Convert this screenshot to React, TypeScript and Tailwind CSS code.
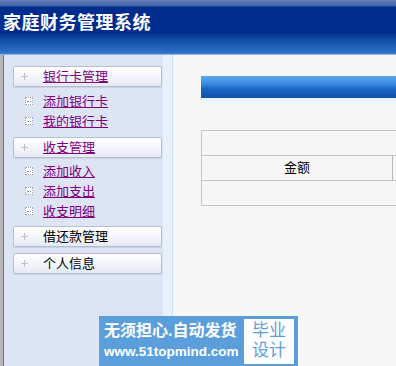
const font = { fontFamily: '"Liberation Sans", "Noto Sans CJK SC", sans-serif' };

function PlusIcon() {
    return (
        <svg width="9" height="9" viewBox="0 0 9 9" className="shrink-0">
            <path d="M4.5 1v7M1 4.5h7" stroke="#b8c0cc" strokeWidth="1" />
        </svg>
    );
}

function DotIcon() {
    return (
        <span className="shrink-0 w-[8px] h-[8px] border border-dotted border-[#9aa4b4] bg-white flex items-center justify-center">
            <span className="w-[4px] h-px border-t border-dotted border-[#8890a0]" />
        </span>
    );
}

type HeadProps = { label: string; link?: boolean };

function MenuHead({ label, link }: HeadProps) {
    return (
        <div className="w-[149px] h-[21px] ml-[9px] flex items-center border border-[#b6bfd0] rounded-[2px] bg-[linear-gradient(#ffffff,#f1f4fa_60%,#e4e9f4)] shadow-[0_1px_0_#c9d3e6]">
            <span className="ml-[6px]"><PlusIcon /></span>
            <span className={"ml-[14px] text-[13px] leading-none " + (link ? "text-[#800080] underline" : "text-black")}>{label}</span>
        </div>
    );
}

function SubItem({ label }: { label: string }) {
    return (
        <div className="h-[20px] flex items-center pl-[21px]">
            <DotIcon />
            <span className="ml-[10px] text-[13px] leading-none text-[#800080] underline">{label}</span>
        </div>
    );
}

export default function App() {
    return (
        <div className="relative w-[396px] h-[366px] overflow-hidden bg-[#f7f7f7]" style={font}>
            <div className="h-[55px] flex items-center bg-[linear-gradient(#6480b8_0px,#3d5fa6_6px,#002c8e_7px,#002c8e_33px,#1450a8_40px,#2a70c4_52px,#3a80d0_54px,#e8eef8_55px)]">
                <span className="ml-[3px] -mt-[8px] text-white text-[18px] font-bold tracking-[0.5px]">家庭财务管理系统</span>
            </div>
            <div className="flex h-[311px]">
                <div className="w-[4px] bg-[#b8b8b8] border-r border-[#707070]" />
                <div className="w-[159px] bg-[#dde5f5] pt-[11px]">
                    <MenuHead label="银行卡管理" link />
                    <div className="pt-[4px] pb-[6px]">
                        <SubItem label="添加银行卡" />
                        <SubItem label="我的银行卡" />
                    </div>
                    <MenuHead label="收支管理" link />
                    <div className="pt-[3px] pb-[5px]">
                        <SubItem label="添加收入" />
                        <SubItem label="添加支出" />
                        <SubItem label="收支明细" />
                    </div>
                    <MenuHead label="借还款管理" />
                    <div className="h-[6px]" />
                    <MenuHead label="个人信息" />
                </div>
                <div className="w-[10px] bg-[#e8f1fa] border-r border-[#cddcef]" />
                <div className="flex-1 pl-[28px] pt-[21px] overflow-hidden">
                    <div className="h-[22px] w-[260px] bg-[linear-gradient(#5aa8ee,#3a8ce0_35%,#1a64c0_60%,#0f52ac)]" />
                    <div className="h-[8px] w-[260px] bg-[linear-gradient(#e8f2fb,#f7f7f7)]" />
                    <div className="mt-[24px] w-[260px] border-l border-[#c4c4c4]">
                        <div className="h-[26px] border-t border-b border-[#c4c4c4]" />
                        <div className="h-[25px] flex border-b border-[#c4c4c4]">
                            <div className="w-[191px] border-r border-[#b8b8b8] flex items-center justify-center text-[13px] text-black">金额</div>
                        </div>
                        <div className="h-[25px] border-b border-[#c4c4c4]" />
                    </div>
                </div>
            </div>
            <div className="absolute left-[99px] top-[316px] w-[199px] h-[50px] bg-[#5a9fdc] flex items-center">
                <div className="flex flex-col pl-[5px] text-white font-bold">
                    <span className="text-[16px] leading-[21px]">无须担心.自动发货</span>
                    <span className="text-[13.5px] leading-[21px]">www.51topmind.com</span>
                </div>
                <div className="ml-auto mr-[4px] w-[50px] h-[45px] bg-white flex flex-col items-center justify-center text-[#5a9fdc] text-[17px] leading-[20px]">
                    <span>毕业</span>
                    <span>设计</span>
                </div>
            </div>
        </div>
    );
}
